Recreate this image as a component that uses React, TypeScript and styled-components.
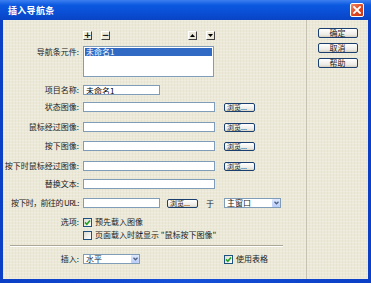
import styled, { createGlobalStyle } from "styled-components";

const GlobalStyle = createGlobalStyle`
  html, body {
    margin: 0;
    padding: 0;
    background: #ffffff;
  }
  body {
    font-family: "Noto Sans CJK SC", "Noto Sans", sans-serif;
    font-size: 8px;
    color: #1a1a1a;
  }
  * {
    box-sizing: border-box;
  }
`;

const CloseIcon = () => (
  <svg width="8" height="8" viewBox="0 0 8 8">
    <path d="M1 1 L7 7 M7 1 L1 7" stroke="#ffffff" strokeWidth="1.8" strokeLinecap="square" />
  </svg>
);

const Tri = ({ down }: { down?: boolean }) => (
  <svg width="5" height="3" viewBox="0 0 5 3">
    <path d={down ? "M0 0 L5 0 L2.5 3 Z" : "M0 3 L5 3 L2.5 0 Z"} fill="#000" />
  </svg>
);

const Chevron = () => (
  <svg width="5" height="4" viewBox="0 0 5 4">
    <path d="M0.5 0.8 L2.5 2.8 L4.5 0.8" stroke="#4d6185" strokeWidth="1.3" fill="none" />
  </svg>
);

const Check = () => (
  <svg width="7" height="7" viewBox="0 0 7 7">
    <path d="M1 3.4 L2.8 5.2 L6 1.4" stroke="#21a121" strokeWidth="1.6" fill="none" />
  </svg>
);

const NavBar = () => {
  return (
    <Window>
      <GlobalStyle />
      <TitleBar>
        <Title>插入导航条</Title>
        <CloseButton>
          <CloseIcon />
        </CloseButton>
      </TitleBar>
      <Body>
        <Form>
          <ToolRow>
            <ToolBtn>+</ToolBtn>
            <ToolBtn $ml={9}>−</ToolBtn>
            <ToolBtn $ml={78}>
              <Tri />
            </ToolBtn>
            <ToolBtn $ml={9}>
              <Tri down />
            </ToolBtn>
          </ToolRow>

          <ListRow>
            <Label $top>导航条元件:</Label>
            <ListBox>
              <ListItem>未命名1</ListItem>
            </ListBox>
          </ListRow>

          <Row $mt={8}>
            <Label>项目名称:</Label>
            <TextInput $w={77} defaultValue="未命名1" />
          </Row>
          <Row $mt={7}>
            <Label>状态图像:</Label>
            <TextInput $w={132} />
            <BrowseBtn $ml={9}>浏览...</BrowseBtn>
          </Row>
          <Row $mt={10}>
            <Label>鼠标经过图像:</Label>
            <TextInput $w={132} />
            <BrowseBtn $ml={9}>浏览...</BrowseBtn>
          </Row>
          <Row $mt={9}>
            <Label>按下图像:</Label>
            <TextInput $w={132} />
            <BrowseBtn $ml={9}>浏览...</BrowseBtn>
          </Row>
          <Row $mt={10}>
            <Label>按下时鼠标经过图像:</Label>
            <TextInput $w={132} />
            <BrowseBtn $ml={9}>浏览...</BrowseBtn>
          </Row>
          <Row $mt={8}>
            <Label>替换文本:</Label>
            <TextInput $w={132} />
          </Row>
          <Row $mt={9}>
            <Label $tight>按下时，前往的 URL:</Label>
            <TextInput $w={77} />
            <BrowseBtn $ml={7}>浏览...</BrowseBtn>
            <Plain $ml={8}>于</Plain>
            <Select $w={57} $ml={10}>
              <span>主窗口</span>
              <ArrowBox>
                <Chevron />
              </ArrowBox>
            </Select>
          </Row>
          <Row $mt={9}>
            <Label>选项:</Label>
            <CheckItem>
              <CheckBox>
                <Check />
              </CheckBox>
              预先载入图像
            </CheckItem>
          </Row>
          <Row $mt={3}>
            <Label />
            <CheckItem>
              <CheckBox />
              页面载入时就显示 "鼠标按下图像"
            </CheckItem>
          </Row>

          <Separator />

          <Row $mt={7}>
            <Label>插入:</Label>
            <Select $w={57}>
              <span>水平</span>
              <ArrowBox>
                <Chevron />
              </ArrowBox>
            </Select>
            <CheckItem $ml={84}>
              <CheckBox>
                <Check />
              </CheckBox>
              使用表格
            </CheckItem>
          </Row>
        </Form>

        <Side>
          <DialogBtn>确定</DialogBtn>
          <DialogBtn>取消</DialogBtn>
          <DialogBtn>帮助</DialogBtn>
        </Side>
      </Body>
    </Window>
  );
};

const Window = styled.div`
  width: 371px;
  height: 283px;
  display: flex;
  flex-direction: column;
  padding: 0 3px 4px 3px;
  background: linear-gradient(90deg, #0a3fc6, #1650d8 50%, #0a3fc6);
`;

const TitleBar = styled.div`
  height: 20px;
  margin: 0 -3px;
  padding: 0 7px 0 8px;
  display: flex;
  align-items: center;
  justify-content: space-between;
  background: linear-gradient(180deg, #3d7ff0 0%, #0b5ae0 25%, #0a4fd6 60%, #0944c4 100%);
`;

const Title = styled.span`
  color: #ffffff;
  font-weight: bold;
  font-size: 9px;
  letter-spacing: 0.3px;
`;

const CloseButton = styled.div`
  width: 14px;
  height: 14px;
  border: 1px solid #ffffff;
  border-radius: 2px;
  background: linear-gradient(135deg, #f0896a, #e0461f 55%, #c33a14);
  display: flex;
  align-items: center;
  justify-content: center;
`;

const Body = styled.div`
  flex: 1;
  display: flex;
  background-color: #ece9d8;
  background-image: repeating-linear-gradient(0deg, rgba(255, 255, 255, 0.18) 0 1px, transparent 1px 3px),
    repeating-linear-gradient(90deg, rgba(200, 196, 170, 0.16) 0 1px, transparent 1px 3px);
`;

const Form = styled.div`
  width: 303px;
  padding-top: 11px;
  display: flex;
  flex-direction: column;
`;

const ToolRow = styled.div`
  display: flex;
  height: 9px;
  padding-left: 80px;
`;

const ToolBtn = styled.div<{ $ml?: number }>`
  width: 9px;
  height: 9px;
  margin-left: ${(p) => p.$ml ?? 0}px;
  border: 1px solid;
  border-color: #ffffff #404040 #404040 #ffffff;
  background: #ece9d8;
  display: flex;
  align-items: center;
  justify-content: center;
  font-size: 9px;
  font-weight: bold;
  line-height: 1;
  font-family: "DejaVu Sans", sans-serif;
`;

const ListRow = styled.div`
  display: flex;
  margin-top: 6px;
  height: 31px;
`;

const Row = styled.div<{ $mt: number }>`
  display: flex;
  align-items: center;
  height: 10px;
  margin-top: ${(p) => p.$mt}px;
`;

const Label = styled.div<{ $top?: boolean; $tight?: boolean }>`
  width: 76px;
  flex-shrink: 0;
  margin-right: 4px;
  display: flex;
  justify-content: flex-end;
  white-space: nowrap;
  line-height: 10px;
  padding-top: ${(p) => (p.$top ? 1 : 0)}px;
  letter-spacing: ${(p) => (p.$tight ? "-0.6px" : "0")};
  color: #222;
`;

const ListBox = styled.div`
  width: 131px;
  height: 31px;
  border: 1px solid #7f9db9;
  background: #ffffff;
  padding: 1px;
`;

const ListItem = styled.div`
  height: 8px;
  line-height: 8px;
  background: #316ac5;
  color: #ffffff;
  padding-left: 1px;
`;

const TextInput = styled.input<{ $w: number }>`
  width: ${(p) => p.$w}px;
  height: 10px;
  border: 1px solid #7f9db9;
  background: #ffffff;
  padding: 0 2px;
  font: inherit;
  font-size: 8px;
  line-height: 8px;
  color: #000;
  outline: none;
`;

const BrowseBtn = styled.div<{ $ml: number }>`
  width: 31px;
  height: 9px;
  margin-left: ${(p) => p.$ml}px;
  border: 1px solid #1b3f6e;
  border-radius: 2px;
  background: linear-gradient(180deg, #ffffff, #ecebe6 70%, #d8d4c6);
  font-size: 7px;
  line-height: 7px;
  padding-left: 2px;
  white-space: nowrap;
  overflow: hidden;
`;

const Plain = styled.span<{ $ml: number }>`
  margin-left: ${(p) => p.$ml}px;
`;

const Select = styled.div<{ $w: number; $ml?: number }>`
  width: ${(p) => p.$w}px;
  height: 10px;
  margin-left: ${(p) => p.$ml ?? 0}px;
  border: 1px solid #7f9db9;
  background: #ffffff;
  display: flex;
  align-items: center;
  justify-content: space-between;
  padding: 0 0 0 2px;
  line-height: 8px;
`;

const ArrowBox = styled.div`
  width: 8px;
  height: 8px;
  background: linear-gradient(180deg, #dfe8fd, #b9cdf9);
  border-radius: 1px;
  display: flex;
  align-items: center;
  justify-content: center;
`;

const CheckItem = styled.div<{ $ml?: number }>`
  display: flex;
  align-items: center;
  gap: 3px;
  margin-left: ${(p) => p.$ml ?? 0}px;
  white-space: nowrap;
  line-height: 10px;
`;

const CheckBox = styled.div`
  width: 9px;
  height: 9px;
  border: 1px solid #1c5180;
  background: linear-gradient(135deg, #dcdcd5, #ffffff);
  display: flex;
  align-items: center;
  justify-content: center;
`;

const Separator = styled.div`
  margin: 5px 0 0 7px;
  width: 273px;
  border-top: 1px solid #aca899;
  border-bottom: 1px solid #ffffff;
`;

const Side = styled.div`
  flex: 1;
  border-left: 1px solid #c5c2b2;
  display: flex;
  flex-direction: column;
  align-items: center;
  padding-top: 8px;
  gap: 5px;
`;

const DialogBtn = styled.div`
  width: 40px;
  height: 10px;
  border: 1px solid #1b3f6e;
  border-radius: 2px;
  background: linear-gradient(180deg, #ffffff, #ecebe6 70%, #d6d0c0);
  text-align: center;
  line-height: 8px;
  font-size: 8px;
`;

export default NavBar;
